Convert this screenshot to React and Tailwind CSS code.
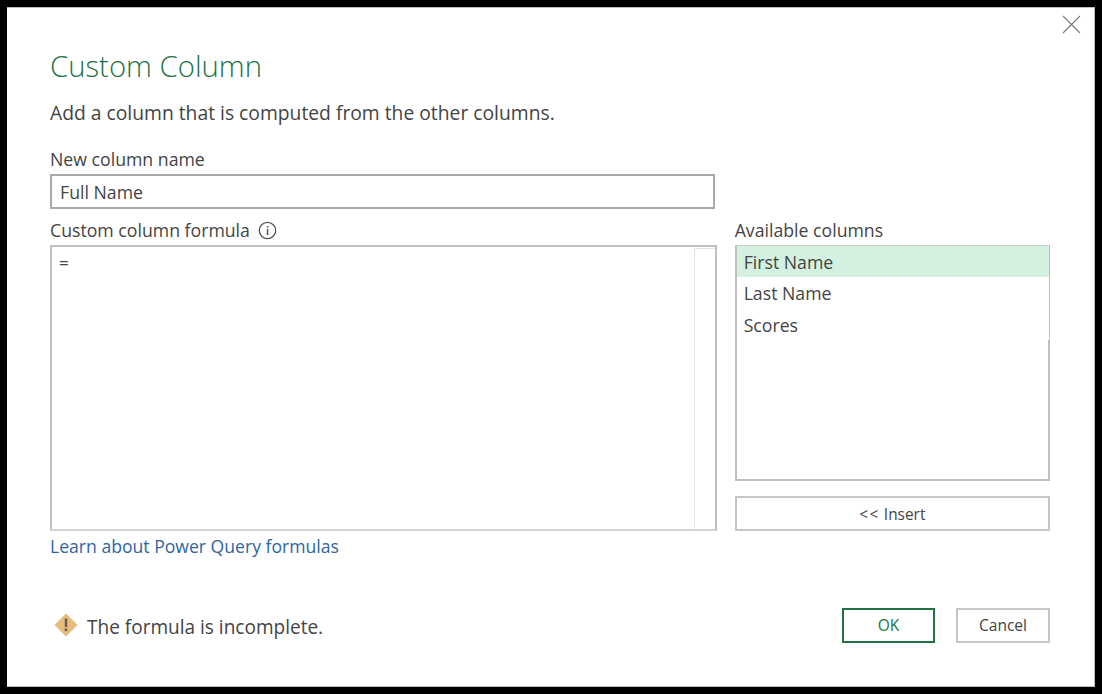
import React from "react";

function Warning() {
  return (
    <svg width="24" height="24" viewBox="0 0 24 24" className="shrink-0">
      <path d="M12 0.5 L23.5 12 L12 23.5 L0.5 12 Z" fill="#e9bb7b" />
      <rect x="10.8" y="5.5" width="2.4" height="8.5" fill="#5d5a58" />
      <rect x="10.8" y="15.5" width="2.4" height="2.6" fill="#5d5a58" />
    </svg>
  );
}

function Info() {
  return (
    <svg width="19" height="19" viewBox="0 0 19 19" className="ml-[8px] mt-[1px]">
      <circle cx="9.5" cy="9.5" r="8.2" fill="none" stroke="#555" strokeWidth="1.3" />
      <rect x="8.8" y="8" width="1.5" height="6" fill="#555" />
      <rect x="8.8" y="5" width="1.5" height="1.6" fill="#555" />
    </svg>
  );
}

export default function App() {
  return (
    <div className="w-[1102px] h-[694px] bg-black p-[7px] font-['Open_Sans','Noto_Sans',sans-serif] text-[#444444] overflow-hidden">
      <div className="relative w-[1088px] h-[680px] bg-white border-r border-b border-t border-[#bdbdbd] pl-[43px] pr-[44px] flex flex-col">
        <button className="absolute right-[13px] top-[7px] w-[19px] h-[19px]">
          <svg width="19" height="19" viewBox="0 0 19 19">
            <path d="M1 1 L18 18 M18 1 L1 18" stroke="#7a7a7a" strokeWidth="1.1" fill="none" />
          </svg>
        </button>

        <h1 className="mt-[36px] h-[44px] leading-[44px] text-[29.3px] font-light text-[#217346] whitespace-nowrap">Custom Column</h1>
        <p className="mt-[11px] h-[28px] leading-[28px] text-[19.3px] whitespace-nowrap">Add a column that is computed from the other columns.</p>

        <label className="mt-[20px] h-[24px] leading-[24px] text-[17.7px] whitespace-nowrap">New column name</label>
        <div className="mt-[3px] w-[665px] h-[35px] border-2 border-[#a9a9a9] pl-[8px] leading-[33px] text-[17.7px] whitespace-nowrap">Full Name</div>

        <div className="mt-[9px] flex gap-[18px]">
          <div className="w-[668px] flex flex-col">
            <div className="flex items-center h-[24px]">
              <span className="text-[17.7px] leading-[24px] whitespace-nowrap">Custom column formula</span>
              <Info />
            </div>
            <div className="mt-[3px] h-[286px] border-2 border-[#bfbfbf] border-b-[#d4d4d4] flex justify-between">
              <span className="pl-[7px] pt-[5px] text-[17px] leading-[22px]">=</span>
              <div className="w-[21px] h-full border-l border-t border-[#e3e3e3] mt-[1px]"></div>
            </div>
            <a className="mt-[3px] h-[24px] leading-[24px] text-[17.6px] text-[#2e659f] whitespace-nowrap">Learn about Power Query formulas</a>
          </div>

          <div className="w-[316px] flex flex-col">
            <span className="h-[24px] text-[17.7px] leading-[24px] whitespace-nowrap">Available columns</span>
            <div className="relative mt-[3px] h-[236px] border-2 border-t border-r border-[#bfbfbf] border-t-[#bfd0c6] flex flex-col text-[17.7px]">
              <div className="h-[31px] bg-[#d3f0e0] pl-[7px] leading-[33px]">First Name</div>
              <div className="h-[32px] pl-[7px] leading-[32px]">Last Name</div>
              <div className="h-[31px] pl-[7px] leading-[32px]">Scores</div>
              <div className="absolute right-[-1px] bottom-0 w-[2px] h-[139px] bg-[#bfbfbf]"></div>
            </div>
            <button className="mt-[15px] h-[35px] border-2 border-[#c6c6c6] text-[15.4px] leading-[33px] text-center whitespace-nowrap"><span className="tracking-[1.5px]">&lt;&lt;</span> Insert</button>
          </div>
        </div>

        <div className="mt-[50px] flex items-center h-[35px]">
          <div className="ml-[4px] mb-[1px]"><Warning /></div>
          <span className="ml-[9px] mt-[2px] text-[19.05px] leading-[28px] whitespace-nowrap">The formula is incomplete.</span>
          <div className="ml-auto flex gap-[21px]">
            <button className="w-[93px] h-[35px] border-2 border-[#217346] text-[#217346] text-[15.5px] leading-[31px]">OK</button>
            <button className="w-[94px] h-[35px] border-2 border-[#c6c6c6] text-[15.5px] leading-[31px]">Cancel</button>
          </div>
        </div>
      </div>
    </div>
  );
}
